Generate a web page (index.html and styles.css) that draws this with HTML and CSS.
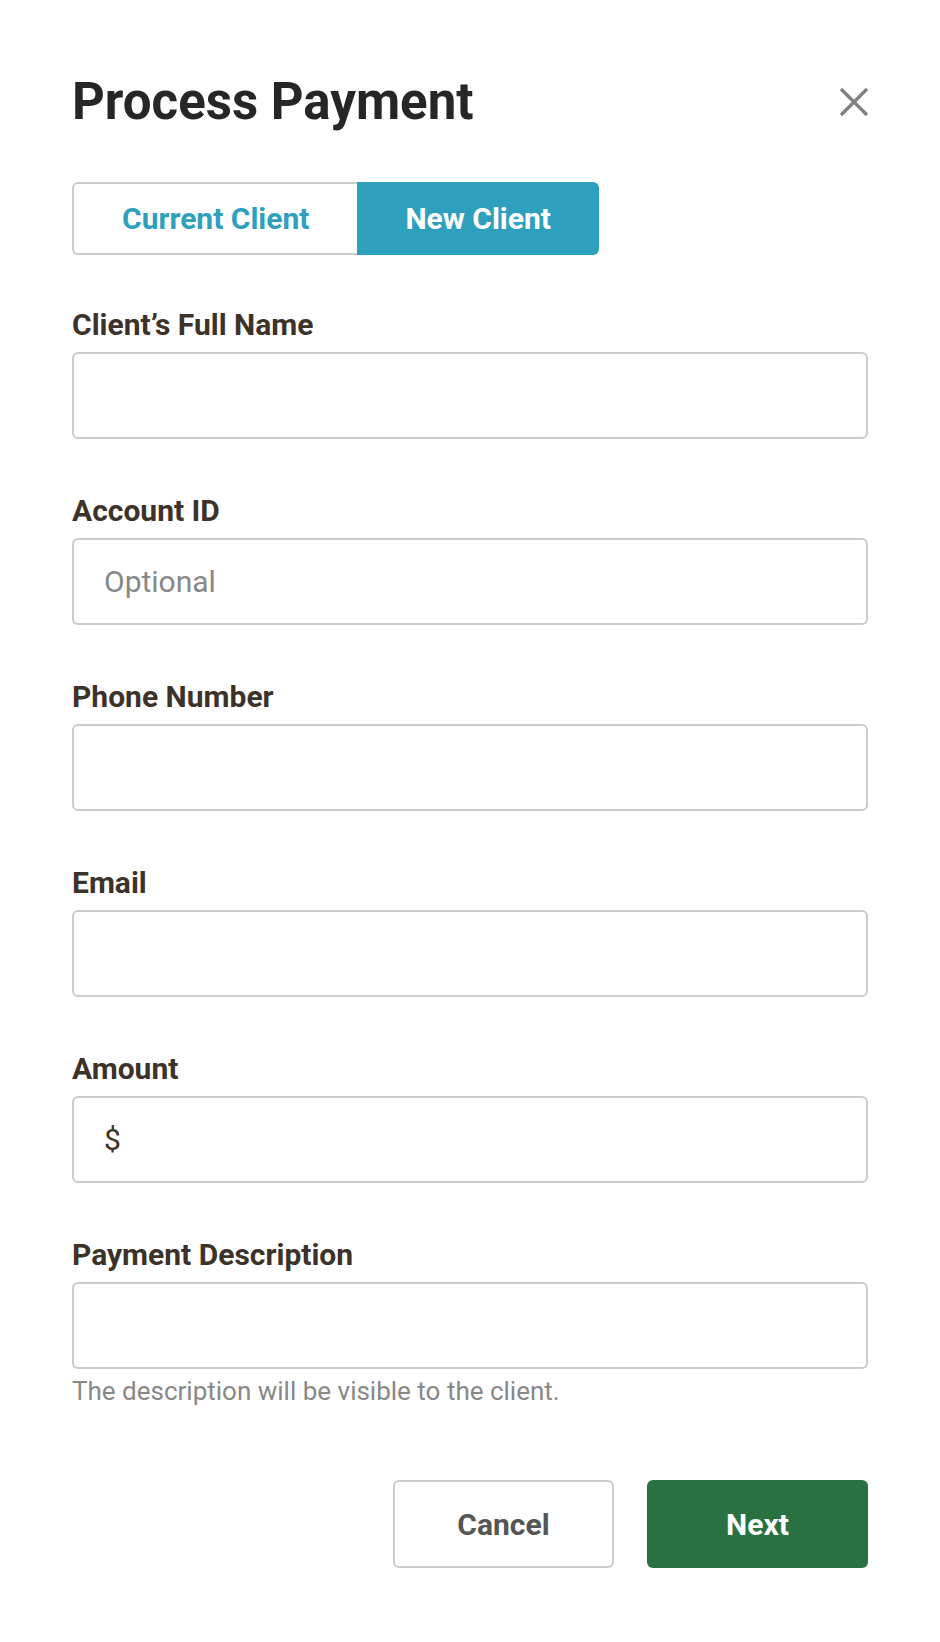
FILE: index.html
```html
<!DOCTYPE html>
<html>

<head>
    <link rel="stylesheet" href="styles.css">
</head>

<body>
    <div id="modal">
        <div id="header">
            <h1 id="title">Process Payment</h1>
            <button type="button" id="closeButton" aria-label="Close">
                <svg width="30" height="30" viewBox="0 0 30 30">
                    <path d="M2 2 L28 28 M28 2 L2 28" stroke="#808080" stroke-width="3.2" fill="none" />
                </svg>
            </button>
        </div>

        <div id="clientToggle">
            <button type="button" class="toggle-option">Current Client</button>
            <button type="button" class="toggle-option active">New Client</button>
        </div>

        <form id="paymentForm">
            <div class="field">
                <label for="fullName">Client&rsquo;s Full Name</label>
                <input type="text" id="fullName" class="text-input" />
            </div>
            <div class="field">
                <label for="accountId">Account ID</label>
                <input type="text" id="accountId" class="text-input" placeholder="Optional" />
            </div>
            <div class="field">
                <label for="phone">Phone Number</label>
                <input type="text" id="phone" class="text-input" />
            </div>
            <div class="field">
                <label for="email">Email</label>
                <input type="text" id="email" class="text-input" />
            </div>
            <div class="field">
                <label for="amount">Amount</label>
                <input type="text" id="amount" class="text-input" value="$" />
            </div>
            <div class="field last">
                <label for="description">Payment Description</label>
                <input type="text" id="description" class="text-input" />
                <p class="hint">The description will be visible to the client.</p>
            </div>

            <div id="actions">
                <button type="button" id="cancelButton">Cancel</button>
                <input type="submit" id="nextButton" value="Next" />
            </div>
        </form>
    </div>
</body>

</html>
```

FILE: styles.css
```css
body {
    font-family: Roboto, "Liberation Sans", sans-serif;
    margin: 0;
    padding: 0;
    background-color: #fff;
}

#modal {
    padding: 72px;
}

#header {
    display: flex;
    justify-content: space-between;
    align-items: center;
    height: 60px;
}

#title {
    margin: 0;
    font-size: 51px;
    line-height: 60px;
    font-weight: 700;
    color: #262626;
}

#closeButton {
    width: 30px;
    height: 30px;
    padding: 0;
    margin-right: -1px;
    border: none;
    background: none;
    cursor: pointer;
}

#closeButton svg {
    display: block;
}

#clientToggle {
    display: flex;
    margin-top: 50px;
    height: 73px;
}

.toggle-option {
    padding: 0 48px;
    font-family: Roboto, "Liberation Sans", sans-serif;
    font-size: 30px;
    font-weight: 700;
    color: #2f9fbe;
    background-color: #fff;
    border: 2px solid #ccc;
    border-right: none;
    border-radius: 6px 0 0 6px;
    cursor: pointer;
}

.toggle-option.active {
    color: #fff;
    background-color: #2f9fbe;
    border: none;
    border-radius: 0 6px 6px 0;
}

#paymentForm {
    margin-top: 53px;
}

.field {
    margin-bottom: 55px;
}

.field.last {
    margin-bottom: 0;
}

.field label {
    display: block;
    margin-bottom: 10px;
    font-size: 30px;
    line-height: 34px;
    font-weight: 700;
    color: #3d3229;
}

.text-input {
    display: block;
    width: 100%;
    height: 87px;
    padding: 0 30px;
    font-family: Roboto, "Liberation Sans", sans-serif;
    font-size: 30px;
    color: #3d3229;
    border: 2px solid #ccc;
    border-radius: 6px;
    box-sizing: border-box;
    outline: none;
}

.text-input::placeholder {
    color: #888;
}

.hint {
    margin: 7px 0 0;
    font-size: 26px;
    line-height: 30px;
    color: #888;
}

#actions {
    display: flex;
    justify-content: flex-end;
    gap: 33px;
    margin-top: 74px;
}

#cancelButton,
#nextButton {
    width: 221px;
    height: 88px;
    font-family: Roboto, "Liberation Sans", sans-serif;
    font-size: 30px;
    font-weight: 700;
    border-radius: 6px;
    box-sizing: border-box;
    cursor: pointer;
}

#cancelButton {
    color: #555;
    background-color: #fff;
    border: 2px solid #ccc;
}

#nextButton {
    color: #fff;
    background-color: #2a7141;
    border: none;
}
```
